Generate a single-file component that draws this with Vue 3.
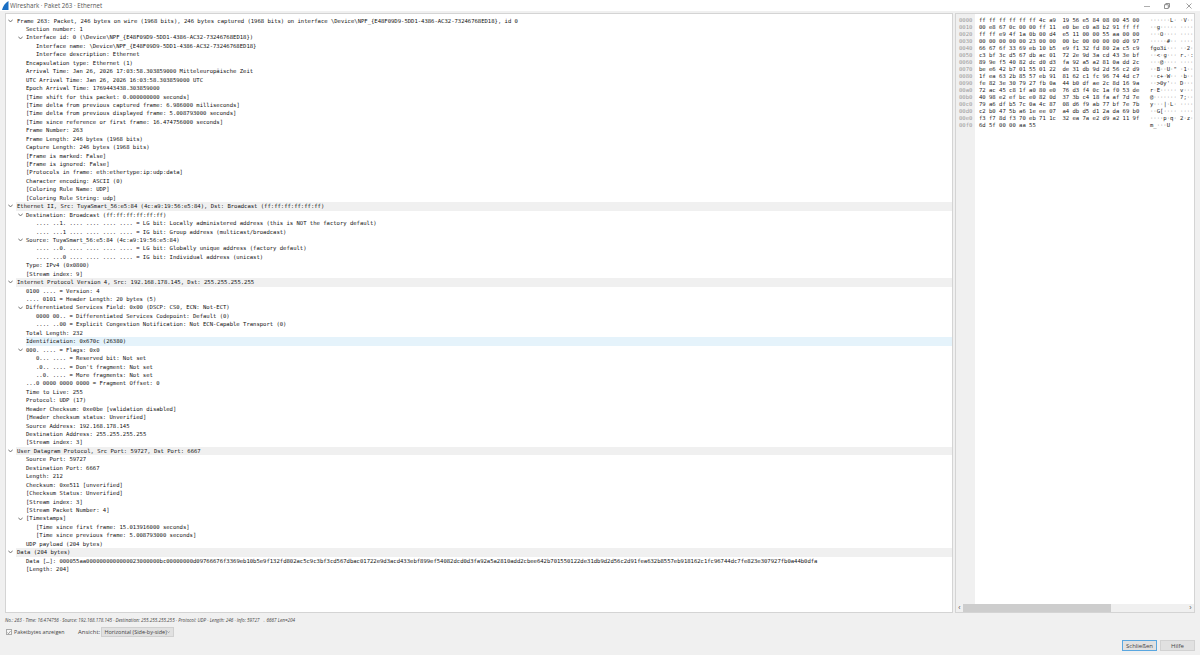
<script setup>
const tree = [
  [0,'o','Frame 263: Packet, 246 bytes on wire (1968 bits), 246 bytes captured (1968 bits) on interface \\Device\\NPF_{E48F09D9-5DD1-4386-AC32-73246768ED18}, id 0'],
  [1,'','Section number: 1'],
  [1,'o','Interface id: 0 (\\Device\\NPF_{E48F09D9-5DD1-4386-AC32-73246768ED18})'],
  [2,'','Interface name: \\Device\\NPF_{E48F09D9-5DD1-4386-AC32-73246768ED18}'],
  [2,'','Interface description: Ethernet'],
  [1,'','Encapsulation type: Ethernet (1)'],
  [1,'','Arrival Time: Jan 26, 2026 17:03:58.303859000 Mitteleuropäische Zeit'],
  [1,'','UTC Arrival Time: Jan 26, 2026 16:03:58.303859000 UTC'],
  [1,'','Epoch Arrival Time: 1769443438.303859000'],
  [1,'','[Time shift for this packet: 0.000000000 seconds]'],
  [1,'','[Time delta from previous captured frame: 6.986000 milliseconds]'],
  [1,'','[Time delta from previous displayed frame: 5.008793000 seconds]'],
  [1,'','[Time since reference or first frame: 16.474756000 seconds]'],
  [1,'','Frame Number: 263'],
  [1,'','Frame Length: 246 bytes (1968 bits)'],
  [1,'','Capture Length: 246 bytes (1968 bits)'],
  [1,'','[Frame is marked: False]'],
  [1,'','[Frame is ignored: False]'],
  [1,'','[Protocols in frame: eth:ethertype:ip:udp:data]'],
  [1,'','Character encoding: ASCII (0)'],
  [1,'','[Coloring Rule Name: UDP]'],
  [1,'','[Coloring Rule String: udp]'],
  [0,'o','Ethernet II, Src: TuyaSmart_56:e5:84 (4c:a9:19:56:e5:84), Dst: Broadcast (ff:ff:ff:ff:ff:ff)',1],
  [1,'o','Destination: Broadcast (ff:ff:ff:ff:ff:ff)'],
  [2,'','.... ..1. .... .... .... .... = LG bit: Locally administered address (this is NOT the factory default)'],
  [2,'','.... ...1 .... .... .... .... = IG bit: Group address (multicast/broadcast)'],
  [1,'o','Source: TuyaSmart_56:e5:84 (4c:a9:19:56:e5:84)'],
  [2,'','.... ..0. .... .... .... .... = LG bit: Globally unique address (factory default)'],
  [2,'','.... ...0 .... .... .... .... = IG bit: Individual address (unicast)'],
  [1,'','Type: IPv4 (0x0800)'],
  [1,'','[Stream index: 9]'],
  [0,'o','Internet Protocol Version 4, Src: 192.168.178.145, Dst: 255.255.255.255',1],
  [1,'','0100 .... = Version: 4'],
  [1,'','.... 0101 = Header Length: 20 bytes (5)'],
  [1,'o','Differentiated Services Field: 0x00 (DSCP: CS0, ECN: Not-ECT)'],
  [2,'','0000 00.. = Differentiated Services Codepoint: Default (0)'],
  [2,'','.... ..00 = Explicit Congestion Notification: Not ECN-Capable Transport (0)'],
  [1,'','Total Length: 232'],
  [1,'','Identification: 0x670c (26380)',2],
  [1,'o','000. .... = Flags: 0x0'],
  [2,'','0... .... = Reserved bit: Not set'],
  [2,'','.0.. .... = Don\'t fragment: Not set'],
  [2,'','..0. .... = More fragments: Not set'],
  [1,'','...0 0000 0000 0000 = Fragment Offset: 0'],
  [1,'','Time to Live: 255'],
  [1,'','Protocol: UDP (17)'],
  [1,'','Header Checksum: 0xe0be [validation disabled]'],
  [1,'','[Header checksum status: Unverified]'],
  [1,'','Source Address: 192.168.178.145'],
  [1,'','Destination Address: 255.255.255.255'],
  [1,'','[Stream index: 3]'],
  [0,'o','User Datagram Protocol, Src Port: 59727, Dst Port: 6667',1],
  [1,'','Source Port: 59727'],
  [1,'','Destination Port: 6667'],
  [1,'','Length: 212'],
  [1,'','Checksum: 0xe511 [unverified]'],
  [1,'','[Checksum Status: Unverified]'],
  [1,'','[Stream index: 3]'],
  [1,'','[Stream Packet Number: 4]'],
  [1,'o','[Timestamps]'],
  [2,'','[Time since first frame: 15.013916000 seconds]'],
  [2,'','[Time since previous frame: 5.008793000 seconds]'],
  [1,'','UDP payload (204 bytes)'],
  [0,'o','Data (204 bytes)',1],
  [1,'','Data […]: 000055aa0000000000000023000000bc00000000d09766676f3369eb10b5e9f132fd802ac5c9c3bf3cd567dbac01722e9d3acd433ebf899ef54082dcd0d3fa92a5a2810add2cbee642b701550122de31db9d2d56c2d91fea632b8557eb918162c1fc96744dc7fe823e307927fb0a44b0dfa'],
  [1,'','[Length: 204]'],
].map(([level, arrow, text, kind]) => ({ level, arrow, text, kind }))

const hexText = `ff ff ff ff ff ff 4c a9 19 56 e5 84 08 00 45 00
00 e8 67 0c 00 00 ff 11 e0 be c0 a8 b2 91 ff ff
ff ff e9 4f 1a 0b 00 d4 e5 11 00 00 55 aa 00 00
00 00 00 00 00 23 00 00 00 bc 00 00 00 00 d0 97
66 67 6f 33 69 eb 10 b5 e9 f1 32 fd 80 2a c5 c9
c3 bf 3c d5 67 db ac 01 72 2e 9d 3a cd 43 3e bf
89 9e f5 40 82 dc d0 d3 fa 92 a5 a2 81 0a dd 2c
be e6 42 b7 01 55 01 22 de 31 db 9d 2d 56 c2 d9
1f ea 63 2b 85 57 eb 91 81 62 c1 fc 96 74 4d c7
fe 82 3e 30 79 27 fb 0a 44 b0 df ae 2c 8d 16 9a
72 ac 45 c8 1f a0 80 e0 76 d3 f4 0c 1a f0 53 de
40 98 e2 ef bc e0 82 0d 37 3b c4 18 fa af 7d 7e
79 a6 df b5 7c 0a 4c 87 08 d6 f9 ab 77 bf 7e 7b
c2 b0 47 5b a6 1e ee 07 a4 db d5 d1 2a da 69 b0
f3 f7 8d f3 70 eb 71 1c 32 ea 7a e2 d9 a2 11 9f
6d 5f 00 00 aa 55`

const asc = a => a.map(b => {
  const c = parseInt(b, 16)
  return c >= 32 && c < 127 ? String.fromCharCode(c) : '·'
}).join('')

// The pane is scrolled so that only the first 13 columns of the ASCII dump are in view.
const VISIBLE_ASCII = 13

// Split the ASCII column into runs so the placeholder dots can be drawn fainter.
const runs = s => (s.match(/·+|[^·]+/g) || []).map(t => ({ t, dot: t[0] === '·' }))

const hexRows = hexText.split('\n').map((l, i) => {
  const b = l.split(' ')
  const full = asc(b.slice(0, 8)) + (b.length > 8 ? ' ' + asc(b.slice(8)) : '')
  return {
    off: (i * 16).toString(16).padStart(4, '0'),
    hex: b.slice(0, 8).join(' ') + (b.length > 8 ? '  ' + b.slice(8).join(' ') : ''),
    ascii: runs(full.slice(0, VISIBLE_ASCII)),
  }
})
</script>

<template>
  <div class="win">
    <header class="titlebar">
      <svg class="logo" width="7" height="9" viewBox="0 0 7 9"><path d="M0 9 C1 5 3 2 6.5 0 L6.5 9 Z" fill="#1a6fc4"/></svg>
      <span class="title">Wireshark · Paket 263 · Ethernet</span>
      <div class="winbtns">
        <svg width="6" height="6" viewBox="0 0 6 6"><path d="M0 3.5H6" stroke="#999" stroke-width=".8" fill="none"/></svg>
        <svg width="6" height="6" viewBox="0 0 6 6"><path d="M.5 1.7h3.8v3.8H.5zM1.8 1.7V.5h3.7v3.7H4.3" stroke="#777" stroke-width=".8" fill="none"/></svg>
        <svg width="6" height="6" viewBox="0 0 6 6"><path d="M.5.5l5 5M5.5.5l-5 5" stroke="#888" stroke-width=".8" fill="none"/></svg>
      </div>
    </header>

    <main class="panes">
      <section class="tree">
        <div v-for="(r, i) in tree" :key="i" class="row" :class="{ head: r.kind === 1, sel: r.kind === 2 }">
          <span class="indent" :class="'l' + r.level">
            <svg v-if="r.arrow" class="chev" width="5" height="4" viewBox="0 0 5 4"><path d="M.3.6 2.5 3 4.7.6" stroke="#555" stroke-width=".8" fill="none"/></svg>
          </span>
          <span class="txt">{{ r.text }}</span>
        </div>
      </section>

      <section class="bytes">
        <div class="hexbody">
          <div class="gutter">
            <div v-for="h in hexRows" :key="h.off" class="hrow">{{ h.off }}</div>
          </div>
          <div class="hexcol">
            <div v-for="h in hexRows" :key="h.off" class="hrow">{{ h.hex }}</div>
          </div>
          <div class="asccol">
            <div v-for="h in hexRows" :key="h.off" class="hrow"><span v-for="(p, j) in h.ascii" :key="j" :class="{ dot: p.dot }">{{ p.t }}</span></div>
          </div>
        </div>
        <div class="hscroll">
          <span class="sarrow">‹</span>
          <div class="strack"><div class="sthumb"></div></div>
          <span class="sarrow">›</span>
        </div>
      </section>
    </main>

    <p class="status">No.: 263 · Time: 16.474756 · Source: 192.168.178.145 · Destination: 255.255.255.255 · Protocol: UDP · Length: 246 · Info: 59727 → 6667 Len=204</p>

    <div class="controls">
      <span class="check"><svg width="5" height="5" viewBox="0 0 6 6"><path d="M.6 3 2.3 4.8 5.4.8" stroke="#555" stroke-width=".8" fill="none"/></svg></span>
      <span class="lbl">Paketbytes anzeigen</span>
      <span class="ansicht">Ansicht:</span>
      <span class="combo"><span class="ctext">Horizontal (Side-by-side)</span>
        <svg width="5" height="4" viewBox="0 0 5 4"><path d="M.3.8 2.5 3 4.7.8" stroke="#666" stroke-width=".7" fill="none"/></svg>
      </span>
    </div>

    <div class="buttons">
      <button class="btn primary">Schließen</button>
      <button class="btn">Hilfe</button>
    </div>
  </div>
</template>

<style>
html, body { margin: 0; padding: 0; background: #f0f0f0; }
</style>

<style scoped>
.win {
  width: 1200px;
  height: 655px;
  background: #f0f0f0;
  overflow: hidden;
  font-family: "Open Sans", "Noto Sans", sans-serif;
  color: #333;
  display: flex;
  flex-direction: column;
}
.titlebar {
  height: 11px;
  background: #fff;
  display: flex;
  align-items: center;
  font-size: 6.2px;
  color: #555;
  flex: none;
}
.logo { margin: 0 1px 0 2px; flex: none; }
.title { flex: 1; }
.winbtns { display: flex; margin-right: 8px; }
.winbtns svg + svg { margin-left: 14px; }
.winbtns svg:last-child { margin-left: 16px; }
.panes {
  flex: none;
  display: flex;
  height: 600px;
  margin: 2px 5px 0 5px;
  gap: 2px;
}
.tree {
  flex: none;
  width: 948px;
  background: #fff;
  border: 1px solid #d4d4d4;
  box-sizing: border-box;
  padding-top: 2.6px;
  overflow: hidden;
  font-family: "DejaVu Sans Mono", monospace;
  font-size: 5.55px;
  color: #111;
}
.row {
  height: 8.445px;
  line-height: 8.445px;
  display: flex;
  white-space: pre;
}
.txt { padding-left: 1px; }
.l1 + .txt, .l2 + .txt { padding-left: 0; }
.head .txt { background: #f0f0f0; flex: 1; }
.sel .txt { background: #e5f3fb; flex: 1; }
.indent { flex: none; display: flex; align-items: center; justify-content: flex-end; padding-right: 3px; box-sizing: border-box; }
.l0 { width: 10px; }
.l1 { width: 20px; }
.l2 { width: 30px; }
.chev { flex: none; }
.bytes {
  flex: 1;
  min-width: 0;
  background: #fff;
  border: 1px solid #d4d4d4;
  box-sizing: border-box;
  display: flex;
  flex-direction: column;
  font-family: "DejaVu Sans Mono", monospace;
  font-size: 5.55px;
  color: #222;
}
.hexbody { flex: 1; min-height: 0; display: flex; overflow: hidden; }
.gutter {
  width: 19px;
  background: #f0f0f0;
  color: #999;
  padding: 2.5px 0 0 3px;
  box-sizing: border-box;
  flex: none;
}
.hexcol { padding: 2.5px 0 0 4px; width: 175px; flex: none; box-sizing: border-box; }
.asccol { padding: 2.5px 0 0 0; flex: 1; min-width: 0; color: #222; }
.dot { color: #888; }
.hrow { height: 7.05px; line-height: 7.05px; white-space: pre; }
.hscroll {
  height: 8px;
  flex: none;
  display: flex;
  align-items: center;
  background: #f0f0f0;
  color: #555;
  font-size: 7px;
  font-family: "Liberation Sans", sans-serif;
}
.sarrow { width: 7px; text-align: center; line-height: 8px; flex: none; }
.strack { flex: 1; height: 8px; }
.sthumb { width: 148px; height: 8px; background: #cdcdcd; }
.status {
  margin: 3px 0 0 5px;
  height: 9px;
  line-height: 9px;
  font-size: 4.58px;
  font-style: italic;
  color: #444;
  flex: none;
  white-space: pre;
}
.controls {
  margin: 2px 0 0 6px;
  display: flex;
  align-items: center;
  height: 10px;
  flex: none;
  font-size: 6px;
  color: #444;
}
.check {
  width: 6px;
  height: 6px;
  border: 1px solid #aaa;
  box-sizing: border-box;
  background: #f8f8f8;
  display: flex;
  align-items: center;
  justify-content: center;
  margin-right: 2px;
}
.lbl { font-size: 5.3px; width: 64px; flex: none; }
.ansicht { margin-right: 3px; width: 20px; flex: none; white-space: pre; }
.combo {
  display: flex;
  align-items: center;
  justify-content: space-between;
  width: 73px;
  height: 10px;
  padding: 0 3px 0 2.5px;
  background: #e1e1e1;
  border: 1px solid #d0d0d0;
  box-sizing: border-box;
  white-space: pre;
}
.ctext { font-size: 5.5px; }
.buttons {
  display: flex;
  justify-content: flex-end;
  gap: 3px;
  margin: 3px 5px 0 0;
  flex: none;
}
.btn {
  width: 35px;
  height: 11px;
  padding: 0;
  background: #e1e1e1;
  border: 1px solid #d2d2d2;
  font: 6px "Open Sans", sans-serif;
  color: #444;
}
.primary { border-color: #5aa7e0; }
</style>
